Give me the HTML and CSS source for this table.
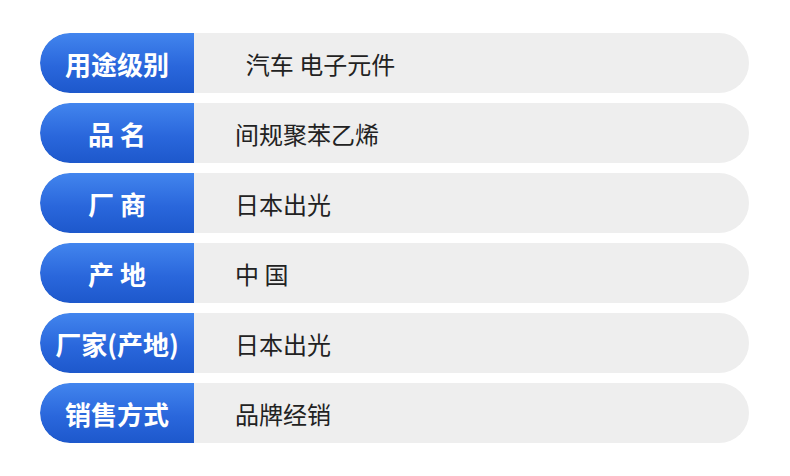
FILE: index.html
```html
<!DOCTYPE html>
<html lang="zh">
<head>
<meta charset="utf-8">
<link rel="stylesheet" href="styles.css">
</head>
<body>
<div class="table">
  <div class="row"><div class="label">用途级别</div><div class="value">&nbsp;&nbsp;汽车 电子元件</div></div>
  <div class="row"><div class="label">品 名</div><div class="value">间规聚苯乙烯</div></div>
  <div class="row"><div class="label">厂 商</div><div class="value">日本出光</div></div>
  <div class="row"><div class="label">产 地</div><div class="value">中 国</div></div>
  <div class="row"><div class="label">厂家(产地)</div><div class="value">日本出光</div></div>
  <div class="row"><div class="label">销售方式</div><div class="value">品牌经销</div></div>
</div>
</body>
</html>
```
FILE: styles.css
```css
html, body {
  margin: 0;
  padding: 0;
  background: #ffffff;
}
body {
  font-family: "Noto Sans CJK SC", "Noto Sans", sans-serif;
}
.table {
  display: flex;
  flex-direction: column;
  gap: 10px;
  padding: 33px 41px 0 40px;
}
.row {
  display: flex;
  height: 60px;
  border-radius: 30px;
  background: #eeeeee;
  overflow: hidden;
}
.label {
  width: 154px;
  flex: none;
  display: flex;
  align-items: center;
  justify-content: center;
  background: linear-gradient(180deg, #4285ee 0%, #2a67dc 55%, #1d58cc 100%);
  color: #ffffff;
  font-weight: 700;
  font-size: 26px;
  border-radius: 30px 0 0 30px;
  white-space: pre;
}
.value {
  display: flex;
  align-items: center;
  padding-left: 41px;
  font-size: 24px;
  color: #222222;
  white-space: pre;
}
```
